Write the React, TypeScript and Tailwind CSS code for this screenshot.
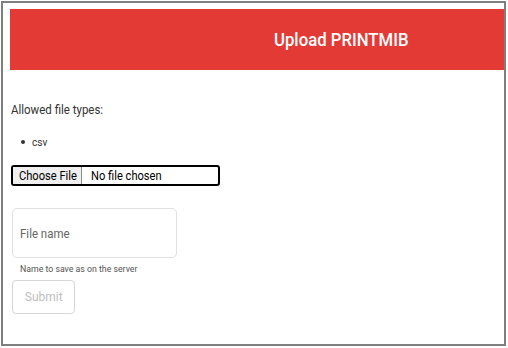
export default function App() {
  return (
    <div className="w-[508px] h-[348px] bg-white relative" style={{ fontFamily: "Roboto, 'Liberation Sans', sans-serif" }}>
      <div className="absolute left-[1px] top-[1px] w-[505px] h-[345px] border-2 border-[#7f7f7f] overflow-hidden">
        <div className="ml-[7px] mt-[6px] h-[61px] w-[600px] bg-[#e43a36] flex items-center pl-[264px]">
          <span className="inline-block origin-left scale-x-[0.93] whitespace-nowrap text-white text-[18px] font-medium">Upload PRINTMIB</span>
        </div>
        <div className="pl-[8px] pt-[31px]">
          <div className="text-[13.5px] text-[#333] leading-[16px]">
            <span className="inline-block origin-left scale-x-[0.85] whitespace-nowrap">Allowed file types:</span>
          </div>
          <ul className="mt-[18px] pl-[10px] flex items-center gap-[7px] text-[11.5px] text-[#333] leading-[14px]">
            <span className="w-[4px] h-[4px] rounded-full bg-[#333]" />
            <li className="inline-block origin-left scale-x-[0.87]">csv</li>
          </ul>
          <div className="mt-[16px] w-[209px] h-[21px] border-2 border-black rounded-[3px] flex items-stretch text-[12.5px] leading-[15px] text-black overflow-hidden">
            <div className="w-[69px] shrink-0 bg-[#efefef] pl-[6px] border-r border-[#8a8a8a] flex items-center">
              <span className="inline-block origin-left scale-x-[0.89] whitespace-nowrap">Choose File</span>
            </div>
            <div className="pl-[9px] flex items-center">
              <span className="inline-block origin-left scale-x-[0.89] whitespace-nowrap">No file chosen</span>
            </div>
          </div>
          <div className="mt-[22px] ml-[1px] w-[165px] h-[50px] border border-[#e0e0e0] rounded-[5px] flex items-center pl-[7px] text-[13.5px] text-[#666]">
            <span className="inline-block origin-left scale-x-[0.85] whitespace-nowrap">File name</span>
          </div>
          <div className="mt-[5px] ml-[9px] text-[9.5px] text-[#555] leading-[11px]">
            <span className="inline-block origin-left scale-x-[0.92] whitespace-nowrap">Name to save as on the server</span>
          </div>
          <div className="mt-[6px] ml-[1px] w-[63px] h-[34px] border border-[#d6d6d6] rounded-[4px] flex items-center justify-center text-[12.5px] text-[#bdbdbd]">
            <span className="inline-block scale-x-[0.96] whitespace-nowrap">Submit</span>
          </div>
        </div>
      </div>
    </div>
  );
}
